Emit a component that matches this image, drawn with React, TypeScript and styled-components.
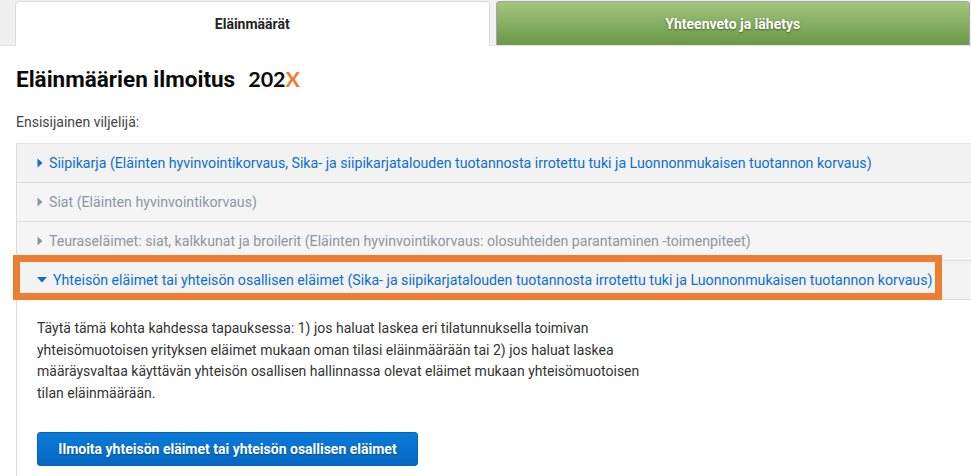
import styled, { createGlobalStyle } from 'styled-components';

const GlobalStyle = createGlobalStyle`
  body {
    margin: 0;
    background: #fff;
    font-family: Roboto, "Liberation Sans", Arial, sans-serif;
    color: #333;
  }
`;

const TabBar = styled.div`
  display: flex;
  gap: 6px;
  height: 46px;
  padding: 1px 1px 0 15px;
  box-sizing: border-box;
  background: #f0f0f0;
  border-bottom: 1px solid #e4e4e4;
`;

const Tab = styled.div<{ $variant: 'active' | 'green' }>`
  flex: 1;
  display: flex;
  align-items: center;
  justify-content: center;
  font-size: 14px;
  font-weight: 700;
  border-radius: 4px 4px 0 0;
  box-sizing: border-box;
  ${({ $variant }) =>
    $variant === 'active'
      ? `
    background: #fff;
    color: #222;
    border: 1px solid #dcdcdc;
    border-bottom: none;
    margin-bottom: -1px;
  `
      : `
    background: linear-gradient(to bottom, #a2c67c, #6a9748);
    color: #fff;
    border: 1px solid #a4a4a4;
    border-bottom: none;
    text-shadow: 0 1px 2px rgba(0, 0, 0, 0.45);
  `}
`;

const Main = styled.main`
  padding-left: 16px;
`;

const Title = styled.h1`
  margin: 0;
  padding-top: 20px;
  font-size: 22.5px;
  font-weight: 700;
  color: #0a0a0a;
  line-height: 26px;
  display: flex;
  align-items: baseline;
  gap: 13px;
`;

const Year = styled.span`
  font-family: Lato, "Open Sans", sans-serif;
  font-size: 21.5px;
  font-weight: 700;
  color: #0a0a0a;

  em {
    font-style: normal;
    color: #ee7d30;
  }
`;

const Label = styled.div`
  margin-top: 21px;
  font-size: 14px;
  color: #444;
  line-height: 18px;
`;

const Accordion = styled.div`
  margin-top: 12px;
  border-top: 1px solid #e4e4e4;
  border-left: 1px solid #dcdcdc;
`;

const Item = styled.div`
  position: relative;
`;

const Header = styled.div<{ $tone: 'link' | 'muted'; $shade: string }>`
  display: flex;
  align-items: center;
  gap: 6px;
  height: 38px;
  padding-left: 20px;
  background: ${({ $shade }) => $shade};
  border-bottom: 1px solid #dedede;
  font-size: 14.17px;
  white-space: nowrap;
  color: ${({ $tone }) => ($tone === 'link' ? '#0c6fd0' : '#8b97a4')};
`;

const Highlight = styled.div`
  position: absolute;
  left: -4px;
  top: -6px;
  width: 929px;
  height: 45px;
  box-sizing: border-box;
  border: 7px solid #ed7d31;
  pointer-events: none;
`;

const Body = styled.div`
  padding: 18px 0 20px 20px;
`;

const Text = styled.p`
  margin: 0;
  width: 625px;
  font-size: 14px;
  line-height: 21.7px;
  color: #333;
`;

const Button = styled.button`
  margin-top: 27px;
  height: 34px;
  width: 381px;
  border: 1px solid #0a63b6;
  border-radius: 3px;
  background: linear-gradient(to bottom, #0b7bd9, #0567c1);
  color: #fff;
  font-family: Roboto, "Liberation Sans", Arial, sans-serif;
  font-size: 14px;
  font-weight: 700;
  text-shadow: 0 1px 1px rgba(0, 0, 0, 0.3);
  cursor: pointer;
`;

function Caret({ open }: { open?: boolean }) {
  return open ? (
    <svg width="10" height="6" viewBox="0 0 10 6">
      <path d="M0 0h10L5 5.5z" fill="currentColor" />
    </svg>
  ) : (
    <svg width="6" height="10" viewBox="0 0 6 10">
      <path d="M0.5 0.5v9L5.5 5z" fill="currentColor" />
    </svg>
  );
}

const rows = [
  {
    text: 'Siipikarja (Eläinten hyvinvointikorvaus, Sika- ja siipikarjatalouden tuotannosta irrotettu tuki ja Luonnonmukaisen tuotannon korvaus)',
    tone: 'link' as const,
    shade: '#f2f2f2',
  },
  {
    text: 'Siat (Eläinten hyvinvointikorvaus)',
    tone: 'muted' as const,
    shade: '#f5f5f5',
  },
  {
    text: 'Teuraseläimet: siat, kalkkunat ja broilerit (Eläinten hyvinvointikorvaus: olosuhteiden parantaminen -toimenpiteet)',
    tone: 'muted' as const,
    shade: '#f5f5f5',
  },
];

export default function App() {
  return (
    <>
      <GlobalStyle />
      <TabBar>
        <Tab $variant="active">Eläinmäärät</Tab>
        <Tab $variant="green">Yhteenveto ja lähetys</Tab>
      </TabBar>
      <Main>
        <Title>
          Eläinmäärien ilmoitus
          <Year>
            202<em>X</em>
          </Year>
        </Title>
        <Label>Ensisijainen viljelijä:</Label>
        <Accordion>
          {rows.map((r) => (
            <Item key={r.text}>
              <Header $tone={r.tone} $shade={r.shade}>
                <Caret />
                {r.text}
              </Header>
            </Item>
          ))}
          <Item>
            <Header $tone="link" $shade="#f3f3f3">
              <Caret open />
              Yhteisön eläimet tai yhteisön osallisen eläimet (Sika- ja siipikarjatalouden tuotannosta irrotettu tuki ja Luonnonmukaisen tuotannon korvaus)
            </Header>
            <Highlight />
          </Item>
          <Body>
            <Text>
              Täytä tämä kohta kahdessa tapauksessa: 1) jos haluat laskea eri tilatunnuksella toimivan
              yhteisömuotoisen yrityksen eläimet mukaan oman tilasi eläinmäärään tai 2) jos haluat laskea
              määräysvaltaa käyttävän yhteisön osallisen hallinnassa olevat eläimet mukaan yhteisömuotoisen
              tilan eläinmäärään.
            </Text>
            <Button>Ilmoita yhteisön eläimet tai yhteisön osallisen eläimet</Button>
          </Body>
        </Accordion>
      </Main>
    </>
  );
}
